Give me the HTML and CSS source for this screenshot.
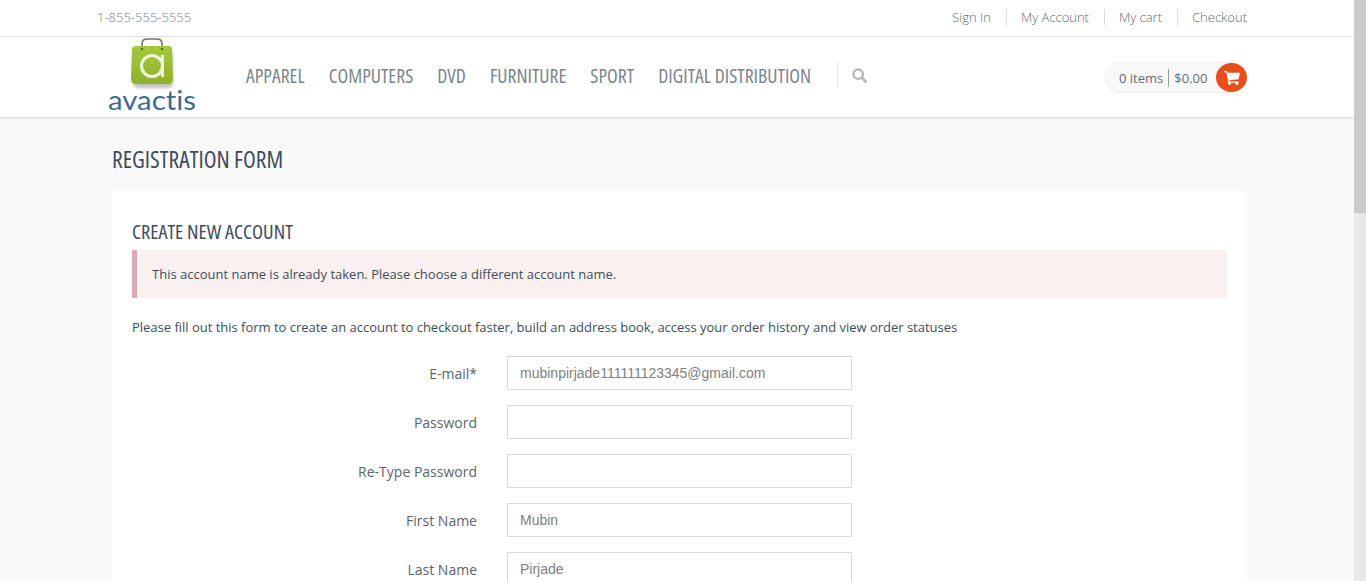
FILE: index.html
```html
<!DOCTYPE html>
<html>
<head>
  <meta charset="UTF-8">
  <title>Registration Form</title>
  <link rel="stylesheet" href="styles.css">
</head>
<body>
  <div class="page">
    <div class="site">
      <div class="topbar">
        <div class="container topbar-inner">
          <span class="phone">1-855-555-5555</span>
          <ul class="toplinks">
            <li><a href="#">Sign In</a></li>
            <li><a href="#">My Account</a></li>
            <li><a href="#">My cart</a></li>
            <li><a href="#">Checkout</a></li>
          </ul>
        </div>
      </div>

      <header class="header">
        <div class="container header-inner">
          <a href="#" class="logo">
            <svg width="92" height="80" viewBox="0 0 92 80">
              <defs>
                <linearGradient id="bag" x1="0" y1="0" x2="0" y2="1">
                  <stop offset="0" stop-color="#a4c93c"/>
                  <stop offset="1" stop-color="#8fb02c"/>
                </linearGradient>
                <filter id="soft" x="-20%" y="-20%" width="140%" height="140%">
                  <feGaussianBlur stdDeviation="1.5"/>
                </filter>
              </defs>
              <rect x="25" y="12" width="40" height="38" rx="5" fill="#777" opacity=".45" filter="url(#soft)"/>
              <path d="M34 12V6c0-3 2-5 5-5h10c3 0 5 2 5 5v6" fill="none" stroke="#6d6d6d" stroke-width="1.500"/>
              <path d="M28 8h33c2 0 3 1 3 3l1 30c0 3-2 5-4.500 5h-33c-2.500 0-4.500-2-4.500-5l1-30c0-2 1-3 5-3z" fill="url(#bag)"/>
              <circle cx="34" cy="11" r="1.300" fill="#5c6b2a"/>
              <circle cx="54" cy="11" r="1.300" fill="#5c6b2a"/>
              <circle cx="44" cy="28" r="10.500" fill="none" stroke="#eef3de" stroke-width="3"/>
              <path d="M54.500 17v22" stroke="#eef3de" stroke-width="3" fill="none"/>
              <text x="0" y="72" textLength="88" lengthAdjust="spacingAndGlyphs" class="logo-text">avactis</text>
            </svg>
          </a>
          <nav class="mainnav">
            <a href="#">APPAREL</a>
            <a href="#">COMPUTERS</a>
            <a href="#">DVD</a>
            <a href="#">FURNITURE</a>
            <a href="#">SPORT</a>
            <a href="#">DIGITAL DISTRIBUTION</a>
          </nav>
          <div class="search">
            <svg width="15" height="15" viewBox="0 0 15 15">
              <circle cx="6.200" cy="6.200" r="4.700" fill="none" stroke="#b5b9bd" stroke-width="2.400"/>
              <path d="M9.800 9.800l3.800 3.800" stroke="#b5b9bd" stroke-width="2.800" stroke-linecap="round"/>
            </svg>
          </div>
          <div class="cart">
            <span class="cart-items">0 items</span>
            <span class="cart-total">$0.00</span>
            <span class="cart-btn">
              <svg width="16" height="15" viewBox="0 0 16 15">
                <path d="M0 1h3l.6 1.800H16l-1.400 6.400-9.200 1 .3 1.300H14.500v1.300H4.500L2.300 2.300H0z" fill="#fff"/>
                <circle cx="5.500" cy="13.500" r="1.400" fill="#fff"/>
                <circle cx="13" cy="13.500" r="1.400" fill="#fff"/>
              </svg>
            </span>
          </div>
        </div>
      </header>

      <main class="container content">
        <h1 class="page-title">REGISTRATION FORM</h1>
        <section class="card">
          <h2 class="card-title">CREATE NEW ACCOUNT</h2>
          <div class="alert">This account name is already taken. Please choose a different account name.</div>
          <p class="intro">Please fill out this form to create an account to checkout faster, build an address book, access your order history and view order statuses</p>
          <form class="regform">
            <div class="row">
              <label>E-mail*</label>
              <input type="text" value="mubinpirjade111111123345@gmail.com">
            </div>
            <div class="row">
              <label>Password</label>
              <input type="password">
            </div>
            <div class="row">
              <label>Re-Type Password</label>
              <input type="password">
            </div>
            <div class="row">
              <label>First Name</label>
              <input type="text" value="Mubin">
            </div>
            <div class="row">
              <label>Last Name</label>
              <input type="text" value="Pirjade">
            </div>
          </form>
        </section>
      </main>
    </div>
    <div class="scrollbar"><div class="scrollbar-thumb"></div></div>
  </div>
</body>
</html>
```

FILE: styles.css
```css
html, body { margin: 0; height: 100%; overflow: hidden; }
body { background: #f9f9f9; color: #3e4d5c; font-family: "Open Sans", Arial, sans-serif; font-size: 13px; }
a { color: inherit; text-decoration: none; }

.page { display: flex; height: 581px; }
.site { flex: 1; min-width: 0; overflow: hidden; }
.scrollbar { width: 12px; background: #e8e8e8; }
.scrollbar-thumb { height: 213px; background: #cbcbcb; }

.container { width: 1170px; margin: 0 auto; box-sizing: border-box; }

.topbar { background: #fff; height: 37px; border-bottom: 1px solid #e8e8e8; box-sizing: border-box; }
.topbar-inner { display: flex; justify-content: space-between; align-items: center; height: 33px; padding: 0 15px 0 5px; }
.phone { color: #7c8389; font-weight: 300; font-size: 13px; }
.toplinks { display: flex; list-style: none; margin: 0; padding: 0; font-weight: 300; color: #616b76; }
.toplinks li { padding: 0 15px 0 14px; border-left: 1px solid #d9d9d9; line-height: 16px; }
.toplinks li:first-child { border-left: none; }
.toplinks li:last-child { padding-right: 0; }

.header { background: #fff; height: 80px; box-shadow: 0 1px 3px rgba(0,0,0,.14); position: relative; }
.header-inner { display: flex; align-items: flex-start; height: 80px; padding: 0 15px 0 16px; }
.logo { display: block; width: 92px; height: 80px; margin-top: 1px; }
.logo-text { font-family: Lato, sans-serif; font-size: 26px; font-variant-ligatures: none; fill: #3f6a93; }
.mainnav { display: flex; gap: 24px; margin: 0 0 0 46px; padding-top: 27px; font-family: "Open Sans", sans-serif; font-stretch: 75%; font-size: 19.700px; color: #7d858c; line-height: 24px; }
.search { margin: 25px 0 0 26px; padding: 6px 0 0 14px; height: 20px; border-left: 1px solid #e3e3e3; }
.search svg { display: block; }
.cart { margin: 25px 0 0 auto; display: flex; align-items: center; height: 31px; width: 142px; box-sizing: border-box; padding-left: 13px; border: 1px solid #eeeeee; border-radius: 16px; background: #f8f8f8; color: #626b74; position: relative; }
.cart-items { padding-right: 5px; border-right: 1px solid #9a9a9a; line-height: 18px; }
.cart-total { padding-left: 5px; }
.cart-btn { position: absolute; right: -1px; top: 0; width: 31px; height: 29px; border-radius: 50%; background: #e84d1c; display: flex; align-items: center; justify-content: center; }

.content { padding: 0 15px 0 20px; }
.page-title { margin: 0; padding-top: 29px; height: 74px; box-sizing: border-box; font-family: "Open Sans", sans-serif; font-stretch: 75%; font-weight: 400; font-size: 23.500px; line-height: 27px; color: #3e4d5c; }
.card { background: #fff; padding: 30px 20px 20px; }
.card-title { margin: 0 0 8px; font-family: "Open Sans", sans-serif; font-stretch: 75%; font-weight: 400; font-size: 20.400px; line-height: 21px; color: #3e4d5c; }
.alert { height: 48px; line-height: 48px; box-sizing: border-box; padding-left: 15px; background: #f9f0ef; border-left: 5px solid #dfa8b4; color: #3e4d5c; }
.intro { margin: 20px 0 20px; line-height: 18px; letter-spacing: -.013px; }

.row { display: flex; align-items: center; height: 34px; margin-bottom: 15px; }
.row label { width: 345px; text-align: right; font-size: 14px; color: #5a6570; }
.row input { width: 345px; height: 34px; margin-left: 30px; box-sizing: border-box; border: 1px solid #dbdbdb; padding: 0 12px; font-family: "Liberation Sans", Arial, sans-serif; font-size: 14px; color: #808080; outline: none; background: #fff; }
```
